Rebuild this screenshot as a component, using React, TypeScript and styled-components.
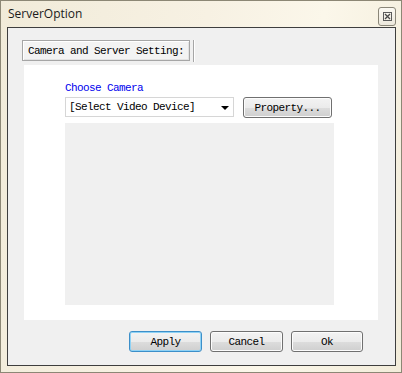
import React from "react";
import styled, { createGlobalStyle } from "styled-components";

const Global = createGlobalStyle`
  html, body { margin: 0; padding: 0; }
  body { width: 402px; height: 373px; overflow: hidden; }
  #root { width: 402px; height: 373px; }
`;

const Window = styled.div`
  box-sizing: border-box;
  width: 402px;
  height: 373px;
  display: flex;
  flex-direction: column;
  border: 1px solid #8c8775;
  background: linear-gradient(100deg, #f1ebd9 0%, #f7f1e3 45%, #fbf7ea 70%, #f2ecda 100%);
`;

const TitleBar = styled.div`
  height: 26px;
  display: flex;
  align-items: center;
  justify-content: space-between;
  padding: 0 5px 0 7px;
`;

const Title = styled.span`
  font-family: "Segoe UI", "Open Sans", "Liberation Sans", sans-serif;
  font-size: 12px;
  color: #1b1b1b;
  margin-top: -1px;
`;

const CloseButton = styled.div`
  box-sizing: border-box;
  width: 18px;
  height: 19px;
  margin-top: 5px;
  border: 1px solid #8a8678;
  border-radius: 3px;
  background: linear-gradient(#fbf9f2, #ece8dc);
  display: flex;
  align-items: center;
  justify-content: center;
`;

const Client = styled.div`
  box-sizing: border-box;
  flex: 1;
  margin: 0 5px 6px 6px;
  border: 1px solid #3e3e3e;
  background: #f0f0f0;
  display: flex;
  flex-direction: column;
  padding: 12px 17px 0 16px;
`;

const Mono = `"Liberation Mono", "DejaVu Sans Mono", monospace`;

const TabStrip = styled.div`
  display: flex;
  align-items: stretch;
  height: 22px;
  margin-left: -2px;
`;

const Tab = styled.div`
  box-sizing: border-box;
  width: 168px;
  height: 21px;
  border: 1px solid #a6a6a6;
  box-shadow: inset 1px 1px 0 #ffffff, inset -1px -1px 0 #e2e2e2;
  background: #f3f3f3;
  font-family: ${Mono};
  font-size: 11px;
  letter-spacing: -0.6px;
  color: #000;
  display: flex;
  align-items: center;
  padding-left: 5px;
`;

const TabDivider = styled.div`
  width: 1px;
  margin-left: 3px;
  height: 22px;
  background: #a6a6a6;
  border-right: 1px solid #ffffff;
`;

const Panel = styled.div`
  margin-top: 3px;
  height: 255px;
  background: #ffffff;
  padding: 16px 0 0 41px;
  box-sizing: border-box;
`;

const Label = styled.div`
  font-family: ${Mono};
  font-size: 11px;
  letter-spacing: -0.6px;
  color: #0000ee;
  height: 16px;
  line-height: 14px;
`;

const Row = styled.div`
  display: flex;
  gap: 9px;
  align-items: flex-start;
`;

const Combo = styled.div`
  box-sizing: border-box;
  width: 169px;
  height: 20px;
  border: 1px solid #d6d6d6;
  background: #fff;
  display: flex;
  align-items: center;
  justify-content: space-between;
  padding: 0 4px 0 3px;
  font-family: ${Mono};
  font-size: 11px;
  letter-spacing: -0.6px;
  color: #000;
`;

const Arrow = styled.span`
  width: 0;
  height: 0;
  border-left: 4px solid transparent;
  border-right: 4px solid transparent;
  border-top: 4px solid #000;
  margin-top: 1px;
`;

const Button = styled.div<{ $w: number; $focus?: boolean }>`
  box-sizing: border-box;
  width: ${(p) => p.$w}px;
  height: 21px;
  border: 1px solid ${(p) => (p.$focus ? "#3c8fc9" : "#707070")};
  border-radius: 3px;
  background: linear-gradient(#f3f3f3 0%, #ebebeb 50%, #dddddd 51%, #cfcfcf 100%);
  box-shadow: ${(p) =>
    p.$focus ? "inset 0 0 0 1px #8fd2f5" : "inset 0 0 0 1px #fcfcfc"};
  display: flex;
  align-items: center;
  justify-content: center;
  font-family: ${Mono};
  font-size: 11px;
  letter-spacing: -0.6px;
  color: #000;
`;

const Preview = styled.div`
  margin-top: 5px;
  width: 269px;
  height: 182px;
  background: #f0f0f0;
`;

const Footer = styled.div`
  display: flex;
  justify-content: flex-end;
  gap: 8px;
  margin-top: 11px;
  margin-right: 15px;
`;

export default function App() {
  return (
    <>
      <Global />
      <Window>
        <TitleBar>
          <Title>ServerOption</Title>
          <CloseButton>
            <svg width="9" height="9" viewBox="0 0 9 9">
              <rect x="0.5" y="0.5" width="8" height="8" fill="none" stroke="#5a5a5a" />
              <path d="M2 2 L7 7 M7 2 L2 7" stroke="#4a4a4a" strokeWidth="1.3" />
            </svg>
          </CloseButton>
        </TitleBar>
        <Client>
          <TabStrip>
            <Tab>Camera and Server Setting:</Tab>
            <TabDivider />
          </TabStrip>
          <Panel>
            <Label>Choose Camera</Label>
            <Row>
              <Combo>
                <span>[Select Video Device]</span>
                <Arrow />
              </Combo>
              <Button $w={89}>Property...</Button>
            </Row>
            <Preview />
          </Panel>
          <Footer>
            <Button $w={73} $focus>Apply</Button>
            <Button $w={73}>Cancel</Button>
            <Button $w={72}>Ok</Button>
          </Footer>
        </Client>
      </Window>
    </>
  );
}
